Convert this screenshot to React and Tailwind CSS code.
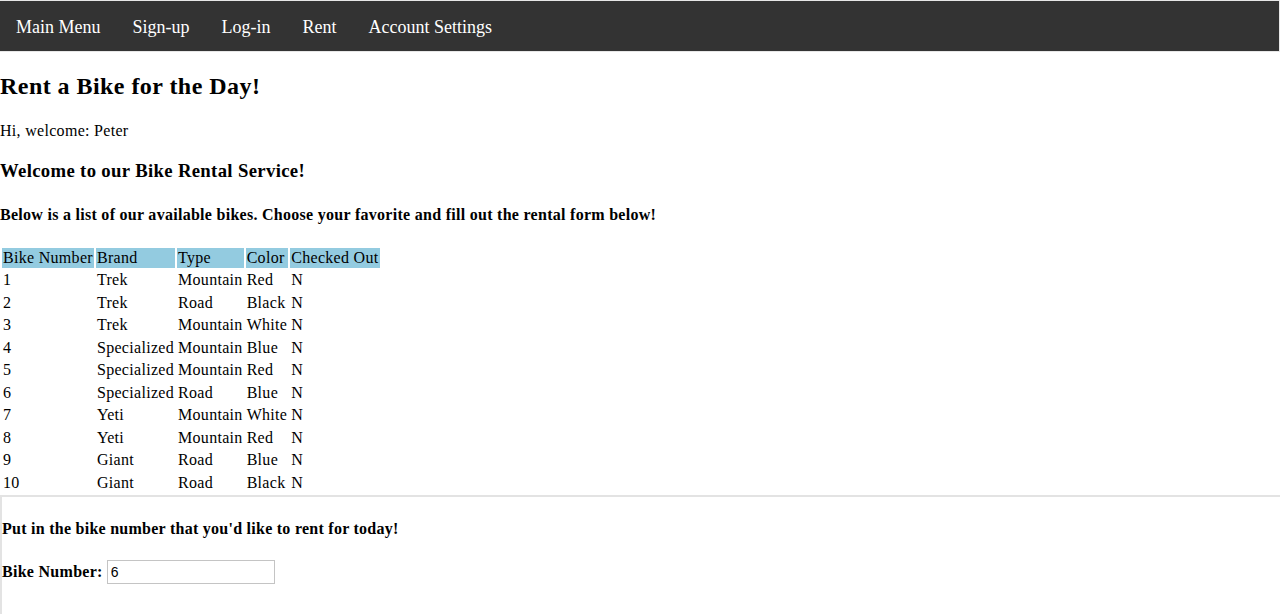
import React from "react";

const bikes = [
  [1, "Trek", "Mountain", "Red", "N"],
  [2, "Trek", "Road", "Black", "N"],
  [3, "Trek", "Mountain", "White", "N"],
  [4, "Specialized", "Mountain", "Blue", "N"],
  [5, "Specialized", "Mountain", "Red", "N"],
  [6, "Specialized", "Road", "Blue", "N"],
  [7, "Yeti", "Mountain", "White", "N"],
  [8, "Yeti", "Mountain", "Red", "N"],
  [9, "Giant", "Road", "Blue", "N"],
  [10, "Giant", "Road", "Black", "N"],
];

export default function App() {
  const links = ["Main Menu", "Sign-up", "Log-in", "Rent", "Account Settings"];
  return (
    <div className="font-['Liberation_Serif','Times_New_Roman',serif] leading-[normal] text-base tracking-[0.3px] text-black bg-white min-h-[614px]">
      <ul className="flex bg-[#333333] border-t border-r border-b border-[#e7e7e7] tracking-normal">
        {links.map((l) => (
          <li key={l}>
            <a className="block px-4 pt-[16px] pb-[13px] text-[18px] text-white">{l}</a>
          </li>
        ))}
      </ul>
      <h2 className="mt-[21px] text-[24px] font-bold tracking-[0.45px]">Rent a Bike for the Day!</h2>
      <p className="mt-[22px]">Hi, welcome: Peter</p>
      <h3 className="mt-[20px] text-[18.72px] font-bold tracking-[0.34px]">
        Welcome to our Bike Rental Service!
      </h3>
      <h4 className="mt-[21px] text-base font-bold tracking-[0.28px]">
        Below is a list of our available bikes. Choose your favorite and fill out the rental form below!
      </h4>
      <table className="mt-[18.5px] border-separate border-spacing-[2px]">
        <thead>
          <tr>
            {["Bike Number", "Brand", "Type", "Color", "Checked Out"].map((h) => (
              <td key={h} className="p-px leading-[18.5px] bg-[#93cbe0] font-normal text-left">
                {h}
              </td>
            ))}
          </tr>
        </thead>
        <tbody>
          {bikes.map((r) => (
            <tr key={r[0]}>
              {r.map((c, i) => (
                <td key={i} className="p-px leading-[18.5px]">
                  {c}
                </td>
              ))}
            </tr>
          ))}
        </tbody>
      </table>
      <div className="border-t-2 border-l-2 border-[#e3e3e3] h-[120px]">
        <h4 className="mt-[19.5px] text-base font-bold tracking-[0.26px]">
          Put in the bike number that you'd like to rent for today!
        </h4>
        <div className="mt-[19.5px] flex items-center">
          <label className="font-bold tracking-[0.28px]">Bike Number:</label>
          <input
            defaultValue="6"
            className="ml-1 w-[168px] h-[24px] border border-[#c4c4c4] px-[3px] font-['Liberation_Sans',Arial,sans-serif] text-[14px] tracking-normal text-black outline-none"
          />
        </div>
      </div>
    </div>
  );
}
